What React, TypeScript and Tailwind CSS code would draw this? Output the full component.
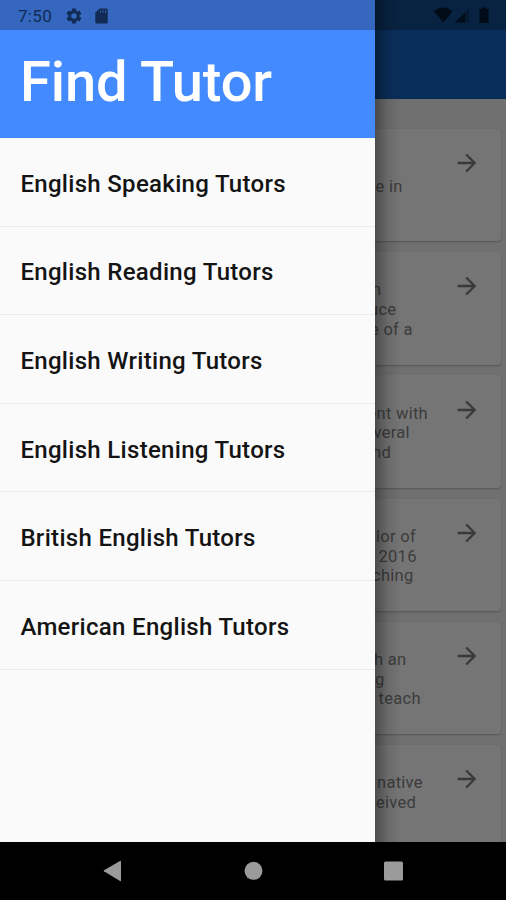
const categories = [
  "English Speaking Tutors",
  "English Reading Tutors",
  "English Writing Tutors",
  "English Listening Tutors",
  "British English Tutors",
  "American English Tutors",
];

const cards = [
  [{ text: "", indent: "" }, { text: "e in", indent: "ml-[0.500px]" }],
  [
    { text: "n", indent: "-ml-[3px]" },
    { text: "uce", indent: "-ml-[6px]" },
    { text: "e of a", indent: "-ml-[5px]" },
  ],
  [
    { text: "ent with", indent: "-ml-[7.500px]" },
    { text: "veral", indent: "-ml-[1.500px]" },
    { text: "nd", indent: "-ml-[3px]" },
  ],
  [
    { text: "lor of", indent: "ml-[1px]" },
    { text: "2016", indent: "ml-[3.500px]" },
    { text: "ching", indent: "-ml-[3px]" },
  ],
  [
    { text: "h an", indent: "-ml-[1px]" },
    { text: "g", indent: "" },
    { text: "teach", indent: "ml-[3.500px]" },
  ],
  [
    { text: "native", indent: "ml-[2px]" },
    { text: "eived", indent: "ml-[1px]" },
  ],
];

const ArrowIcon = () => (
  <svg className="w-[28px] h-[28px] fill-[#3a3a3a]" viewBox="0 0 24 24">
    <path d="M12 4l-1.41 1.41L16.17 11H4v2h12.17l-5.58 5.59L12 20l8-8z" />
  </svg>
);

const GearIcon = () => (
  <svg className="w-[18px] h-[18px] fill-[#122b54]" viewBox="0 0 24 24">
    <path d="M19.43 12.98c.04-.32.07-.64.07-.98s-.03-.66-.07-.98l2.11-1.65c.19-.15.24-.42.12-.64l-2-3.46c-.12-.22-.39-.3-.61-.22l-2.49 1c-.52-.4-1.08-.73-1.69-.98l-.38-2.65C14.46 2.18 14.25 2 14 2h-4c-.25 0-.46.18-.49.42l-.38 2.65c-.61.25-1.17.59-1.69.98l-2.49-1c-.23-.09-.49 0-.61.22l-2 3.46c-.13.22-.07.49.12.64l2.11 1.65c-.04.32-.07.65-.07.98s.03.66.07.98l-2.11 1.65c-.19.15-.24.42-.12.64l2 3.46c.12.22.39.3.61.22l2.49-1c.52.4 1.08.73 1.69.98l.38 2.65c.03.24.24.42.49.42h4c.25 0 .46-.18.49-.42l.38-2.65c.61-.25 1.17-.59 1.69-.98l2.49 1c.23.09.49 0 .61-.22l2-3.46c.12-.22.07-.49-.12-.64l-2.11-1.65zM12 15.7a3.7 3.7 0 1 1 0-7.4 3.7 3.7 0 0 1 0 7.4z" />
  </svg>
);

const SdCardIcon = () => (
  <svg className="w-[13px] h-[16px]" viewBox="0 0 13 16">
    <path className="fill-[#122b54]" d="M4.5.5h7A1.2 1.2 0 0 1 12.7 1.7v12.6a1.2 1.2 0 0 1-1.2 1.2h-10A1.2 1.2 0 0 1 .3 14.3V4.8z" />
    <path className="stroke-[#2c579f]" strokeWidth="1" d="M5.5 2v3M8 2v3M10.5 2v3" />
  </svg>
);

const Drawer = () => (
  <aside className="w-[375px] shrink-0 bg-[#fafafa] flex flex-col">
    <div className="h-[30px] shrink-0 bg-[#3467bd] flex items-center pl-[18px] pt-[1px] text-[#122b54]">
      <span className="w-[47px] pt-[1px] text-[17px] tracking-[0.300px] leading-none">7:50</span>
      <GearIcon />
      <span className="ml-[12px]">
        <SdCardIcon />
      </span>
    </div>
    <div className="h-[108px] shrink-0 bg-[#448aff] pl-[20px] pt-[19px]">
      <h1 className="text-[56px] leading-[66px] tracking-[-0.100px] font-medium text-white whitespace-nowrap">Find Tutor</h1>
    </div>
    <ul>
      {categories.map((name) => (
        <li
          key={name}
          className="h-[88.600px] flex items-center border-b border-[#ececec] pl-[20.400px] pt-[4px] text-[24px] tracking-[0.310px] font-medium text-[#141414] whitespace-nowrap"
        >
          {name}
        </li>
      ))}
    </ul>
  </aside>
);

const TutorList = () => (
  <main className="flex-1 min-w-0 bg-[#707070] flex flex-col overflow-hidden">
    <div className="h-[30px] shrink-0 bg-[#082341] flex items-center justify-end pr-[15px]">
      <svg className="w-[58px] h-[18px] fill-[#020c18]" viewBox="0 0 58 18">
        <path d="M1 5.500Q10.300-2.500 19.600 5.500L10.300 16.500z" />
        <path d="M22 16.500L36 2.500v14z" fillOpacity=".4" />
        <path d="M22 16.500L32 6.500v10z" />
        <path d="M46.500 3h2V1.500h5V3h2v14h-9z" />
      </svg>
    </div>
    <div className="h-[69px] shrink-0 bg-[#0a2e5a]" />
    <div className="flex flex-col gap-[10.800px] pt-[30px] pr-[5px]">
      {cards.map((lines, i) => (
        <div
          key={i}
          className="h-[112.400px] shrink-0 flex justify-between rounded-r-[4px] bg-[#757575] shadow-[0_1px_2px_#555555] pt-[28.300px] text-[#3c3c3c]"
        >
          <div className="text-[16.500px] leading-[19.700px] tracking-[0.280px] whitespace-nowrap">
            {lines.map((line, n) => (
              <p key={n} className={`h-[19.700px] ${line.indent}`}>
                {line.text}
              </p>
            ))}
          </div>
          <div className="mr-[20px] -mt-[8px]">
            <ArrowIcon />
          </div>
        </div>
      ))}
    </div>
  </main>
);

const NavBar = () => (
  <nav className="h-[58px] shrink-0 bg-black">
    <svg className="w-full h-full fill-[#9b9b9b]" viewBox="0 0 506 58">
      <path d="M104 28.300L120 19Q121 18.500 121 19.500v19q0 1-1 .5L104 29.300q-.8-.5 0-1z" />
      <circle cx="253.500" cy="28.800" r="9" />
      <rect x="384" y="19.500" width="19" height="19" rx="1.500" />
    </svg>
  </nav>
);

export default function App() {
  return (
    <div className="w-[506px] h-[900px] flex flex-col overflow-hidden font-[Roboto,sans-serif]">
      <div className="relative h-[842px] shrink-0 flex overflow-hidden">
        <Drawer />
        <TutorList />
        {/* Drawer shadow over the page */}
        <div className="absolute left-[375px] top-0 h-full w-[26px] bg-linear-to-r from-black/35 via-black/10 to-transparent" />
      </div>
      <NavBar />
    </div>
  );
}
